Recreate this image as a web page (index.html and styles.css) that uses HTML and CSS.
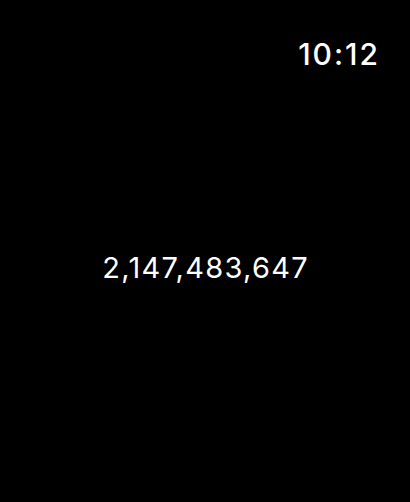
FILE: index.html
```html
<!DOCTYPE html>
<html>
<head>
<meta charset="utf-8">
<link rel="stylesheet" href="styles.css">
</head>
<body>
<div class="screen">
  <header class="status">
    <span class="time">10:12</span>
  </header>
  <main class="content">
    <span class="value">2,147,483,647</span>
  </main>
</div>
</body>
</html>
```
FILE: styles.css
```css
html, body {
  margin: 0;
  padding: 0;
  background: #000;
  width: 410px;
  height: 502px;
  overflow: hidden;
}
.screen {
  display: flex;
  flex-direction: column;
  height: 502px;
  font-family: Inter, "Noto Sans", sans-serif;
  color: #fff;
}
.status {
  display: flex;
  justify-content: flex-end;
  padding: 36px 32px 0 0;
  height: 36px;
}
.time {
  font-size: 30px;
  font-weight: 500;
  line-height: 36px;
  letter-spacing: 2px;
  margin-right: -2px;
}
.content {
  flex: 1;
  display: flex;
  justify-content: center;
  padding-top: 178px;
}
.value {
  font-size: 29px;
  font-weight: 400;
  line-height: 36px;
  height: 36px;
  letter-spacing: 1.3px;
  margin-right: -1.3px;
  padding-left: 0;
}
```
